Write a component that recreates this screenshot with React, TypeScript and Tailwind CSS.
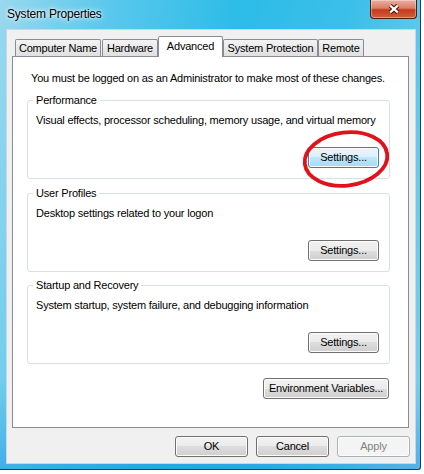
import React from "react";

type Variant = "normal" | "hot" | "disabled";

const buttonStyles: Record<Variant, string> = {
  normal:
    "border-[#707070] bg-[linear-gradient(#f2f2f2_0%,#ebebeb_50%,#dddddd_50%,#cfcfcf_100%)] text-black",
  hot: "border-[#3c7fb1] bg-[linear-gradient(#eaf6fd_0%,#d9f0fc_50%,#bee6fd_50%,#a7d9f5_100%)] text-black",
  disabled: "border-[#adb2b5] bg-[#f4f4f4] text-[#838383]",
};

function Button({
  label,
  width,
  variant = "normal",
}: {
  label: string;
  width: string;
  variant?: Variant;
}) {
  return (
    <button
      className={`${width} h-[21px] rounded-[3px] border shadow-[inset_0_0_0_1px_#fcfcfc] text-[11px] leading-none ${buttonStyles[variant]}`}
    >
      {label}
    </button>
  );
}

function GroupBox({
  title,
  text,
  variant,
}: {
  title: string;
  text: string;
  variant?: Variant;
}) {
  return (
    <div className="relative h-[79px] w-[363px] rounded-[3px] border border-[#d5dfe5] pl-[8px] pt-[12px]">
      <span className="absolute -top-[8px] left-[5px] bg-white px-[3px] leading-[14px]">
        {title}
      </span>
      <p className="leading-[14px]">{text}</p>
      <div className="mt-[20px] flex justify-end pr-[10px]">
        <Button label="Settings..." width="w-[71px]" variant={variant} />
      </div>
    </div>
  );
}

const tabs = [
  { label: "Computer Name", width: "w-[86px]" },
  { label: "Hardware", width: "w-[56px] ml-[1px]" },
  { label: "Advanced", width: "w-[65px]", active: true },
  { label: "System Protection", width: "w-[95px]" },
  { label: "Remote", width: "w-[46px]" },
];

export default function App() {
  return (
    <div className="relative h-[474px] w-[424px] overflow-hidden bg-white font-['Liberation_Sans',Arial,sans-serif] text-[11px] tracking-[-0.2px] text-black">
      {/* window frame: aero glass */}
      <div className="flex h-[470px] w-[421px] flex-col rounded-br-[3px] border-b border-r border-[#1f3d58] bg-[linear-gradient(180deg,rgba(255,255,255,0)_0px,rgba(255,255,255,0)_380px,rgba(20,140,225,0.45)_470px),linear-gradient(100deg,#9ad8ef_0%,#5ac8ec_22%,#2cbce7_48%,#3bbfe9_70%,#80d0ef_100%)]">
        {/* title bar */}
        <div className="flex h-[29px] shrink-0 items-start">
          <span className="pl-[7px] pt-[7px] text-[12px] leading-[14px] [text-shadow:0_0_6px_#ffffff,0_0_3px_#ffffff]">
            System Properties
          </span>
          <button className="ml-auto mr-[3px] flex h-[19px] w-[47px] items-center justify-center rounded-b-[4px] border border-t-0 border-[#4c1d12] bg-[linear-gradient(#eab0a2_0%,#dc7d66_45%,#c43a1c_55%,#d2603c_100%)] shadow-[inset_0_0_0_1px_rgba(255,255,255,0.35)]">
            <svg width="12" height="10" viewBox="0 0 12 10">
              <path d="M2.2 1.6 L9.8 8.4 M9.8 1.6 L2.2 8.4" stroke="#3a1208" strokeWidth="4.2" />
              <path d="M2.2 1.6 L9.8 8.4 M9.8 1.6 L2.2 8.4" stroke="#ffffff" strokeWidth="2.2" />
            </svg>
          </button>
        </div>

        {/* client area */}
        <div className="ml-[6px] flex h-[435px] w-[410px] flex-col border border-[#c7d8e3] bg-[#f0f0f0]">
          {/* tab strip */}
          <div className="ml-[8px] mt-[6px] flex h-[20px] items-end">
            {tabs.map((t) =>
              t.active ? (
                <div
                  key={t.label}
                  className={`${t.width} relative z-10 -mb-[1px] flex h-[21px] items-center justify-center rounded-t-[2px] border border-b-0 border-[#898c95] bg-white pb-[1px]`}
                >
                  {t.label}
                </div>
              ) : (
                <div
                  key={t.label}
                  className={`${t.width} flex h-[17px] items-center justify-center rounded-t-[2px] border border-b-0 border-[#898c95] bg-[linear-gradient(#f3f3f3,#e0e0e0)]`}
                >
                  {t.label}
                </div>
              )
            )}
          </div>

          {/* tab panel */}
          <div className="ml-[5px] flex h-[372px] w-[397px] flex-col border border-[#898c95] bg-white pl-[14px] pt-[14px]">
            <p className="ml-[4px] leading-[14px]">
              You must be logged on as an Administrator to make most of these changes.
            </p>
            <div className="mt-[15px]">
              <GroupBox
                title="Performance"
                text="Visual effects, processor scheduling, memory usage, and virtual memory"
                variant="hot"
              />
            </div>
            <div className="mt-[14px]">
              <GroupBox title="User Profiles" text="Desktop settings related to your logon" />
            </div>
            <div className="mt-[13px]">
              <GroupBox
                title="Startup and Recovery"
                text="System startup, system failure, and debugging information"
              />
            </div>
            <div className="mt-[14px] flex w-[363px] justify-end pr-[1px]">
              <Button label="Environment Variables..." width="w-[126px]" />
            </div>
          </div>

          {/* dialog buttons */}
          <div className="mt-[8px] flex justify-end gap-[8px] pr-[5px]">
            <Button label="OK" width="w-[73px]" />
            <Button label="Cancel" width="w-[73px]" />
            <Button label="Apply" width="w-[73px]" variant="disabled" />
          </div>
        </div>
      </div>

      {/* red annotation circle */}
      <svg
        className="pointer-events-none absolute left-[296px] top-[124px]"
        width="100"
        height="70"
        viewBox="0 0 100 70"
      >
        <ellipse
          cx="50"
          cy="35"
          rx="41.5"
          ry="26.5"
          transform="rotate(-7 50 35)"
          fill="none"
          stroke="#e0121c"
          strokeWidth="3.8"
        />
      </svg>
    </div>
  );
}
